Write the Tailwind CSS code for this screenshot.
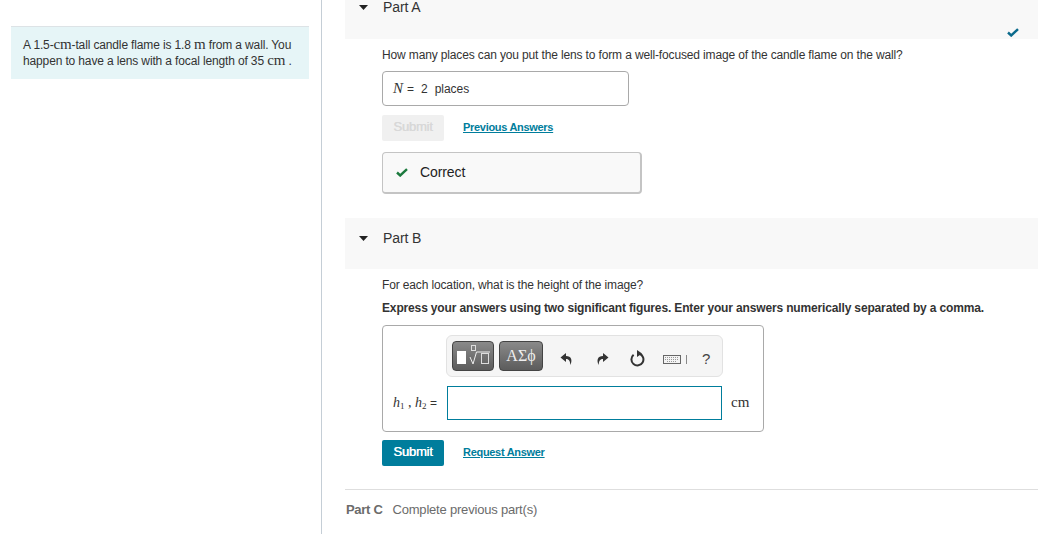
<!DOCTYPE html>
<html lang="en">
<head>
<meta charset="UTF-8">
<title>Part B</title>
<script src="https://cdn.jsdelivr.net/npm/@tailwindcss/browser@4"></script>
</head>
<body class="bg-white font-['Liberation_Sans',Arial,sans-serif] text-[12px] text-[#333] overflow-hidden">
<div class="flex h-[534px] w-[1047px] overflow-hidden">

  <!-- left: problem intro -->
  <div class="w-[322px] shrink-0 border-r border-[#c5ced6] pl-[11px] pr-[12px] pt-[26px]">
    <div class="h-[53px] w-[298px] border-t border-[#dde3e6] bg-[#e6f5f7] pl-[12px] pr-[10px] pt-[10px] leading-[15px] tracking-[-0.14px] text-[#333]">
      A 1.5-<span class="font-['Liberation_Serif',serif] text-[15px] leading-none">cm</span>-tall candle flame is 1.8 <span class="font-['Liberation_Serif',serif] text-[15px] leading-none">m</span> from a wall. You happen to have a lens with a focal length of 35 <span class="font-['Liberation_Serif',serif] text-[15px] leading-none">cm</span> .
    </div>
  </div>

  <!-- right: parts -->
  <div class="ml-[23px] w-[693px] shrink-0 -mt-[12px]">

    <!-- part A -->
    <div class="relative flex h-[51px] items-start bg-[#f8f8f8] pl-[14px] pt-[11px]">
      <svg class="mt-[6px] h-[5px] w-[9px]" viewBox="0 0 9 5"><path d="M0 0h9L4.5 5z" fill="#222"/></svg>
      <span class="ml-[15px] text-[14px] leading-[17px] tracking-[-0.1px] text-[#333]">Part A</span>
      <svg class="absolute right-[19px] top-[40px] h-[9px] w-[12px]" viewBox="0 0 12 9"><path d="M1 4.5l3.2 3L11 1.2" fill="none" stroke="#0b6a8c" stroke-width="2.4"/></svg>
    </div>
    <div class="pl-[37px]">
      <p class="mt-[9px] h-[15px] leading-[15px] tracking-[-0.14px]">How many places can you put the lens to form a well-focused image of the candle flame on the wall?</p>
      <div class="mt-[8px] flex h-[35px] w-[247px] items-center rounded-[4px] border border-[#a9a9a9] pl-[10px]">
        <span class="font-['Liberation_Serif',serif] text-[15px] italic">N</span>
        <span class="ml-[4px]">=</span>
        <span class="ml-[7px]">2</span>
        <span class="ml-[7px] tracking-[-0.05px]">places</span>
      </div>
      <div class="mt-[9px] flex items-center">
        <div class="flex h-[26px] w-[62px] items-center justify-center rounded-[2px] bg-[#f0f0f0] pb-[2px] text-[13px] tracking-[-0.2px] text-[#d8d8d8] [text-shadow:0.3px_0_0_#d8d8d8]">Submit</div>
        <a class="ml-[19px] mt-[-1px] text-[11px] font-bold tracking-[-0.3px] text-[#007d9c] underline">Previous Answers</a>
      </div>
      <div class="mt-[11px] flex h-[42px] w-[260px] items-center rounded-[4px] border border-[#c4c4c4] border-r-2 border-b-2 bg-[#f9f9f9] pl-[13px]">
        <svg class="h-[9px] w-[12px]" viewBox="0 0 12 9"><path d="M1 4.5l3.2 3L11 1.2" fill="none" stroke="#1c7a3e" stroke-width="2.4"/></svg>
        <span class="ml-[12px] text-[14px] tracking-[-0.1px] text-[#222]">Correct</span>
      </div>
    </div>

    <!-- part B -->
    <div class="mt-[24px] flex h-[51px] items-start bg-[#f8f8f8] pl-[14px] pt-[12px]">
      <svg class="mt-[6px] h-[5px] w-[9px]" viewBox="0 0 9 5"><path d="M0 0h9L4.5 5z" fill="#222"/></svg>
      <span class="ml-[15px] text-[14px] leading-[17px] tracking-[-0.1px] text-[#333]">Part B</span>
    </div>
    <div class="pl-[37px]">
      <p class="mt-[9px] h-[15px] leading-[15px] tracking-[-0.14px]">For each location, what is the height of the image?</p>
      <p class="mt-[8px] h-[15px] font-bold leading-[15px] tracking-[-0.15px]">Express your answers using two significant figures. Enter your answers numerically separated by a comma.</p>
      <div class="mt-[9px] h-[107px] w-[382px] rounded-[4px] border border-[#a9a9a9] pt-[9px]">
        <!-- toolbar -->
        <div class="ml-[63px] flex h-[42px] w-[277px] items-center rounded-[6px] border border-[#e2e2e2] bg-[#f5f5f5] pl-[5px]">
          <div class="flex h-[30px] w-[42px] items-center justify-center rounded-[4px] border border-[#444] bg-gradient-to-b from-[#8a8a8a] to-[#5c5c5c]">
            <svg class="h-[26px] w-[38px]" viewBox="0 0 38 26">
              <rect x="3" y="8" width="9" height="13" fill="#fff"/>
              <rect x="17.5" y="2.5" width="4" height="5" fill="none" stroke="#ddd" stroke-width="1"/>
              <path d="M16 14l3 7 3.5-12H36" fill="none" stroke="#eee" stroke-width="1"/>
              <rect x="27.5" y="10.5" width="7" height="10" fill="none" stroke="#ddd" stroke-width="1"/>
            </svg>
          </div>
          <div class="ml-[5px] flex h-[30px] w-[44px] items-center justify-center rounded-[4px] border border-[#444] bg-gradient-to-b from-[#8a8a8a] to-[#5c5c5c] font-['Liberation_Serif',serif] text-[16px] text-[#eee]">ΑΣϕ</div>
          <svg class="ml-[17px] mt-[5px] h-[14px] w-[13px]" viewBox="0 0 13 14"><path d="M6 1L0.5 5.5 6 10V7c2.6 0 4 1.4 4.4 6C12.6 8 11.5 3.9 6 3.9z" fill="#333"/></svg>
          <svg class="ml-[23px] mt-[5px] h-[14px] w-[13px]" viewBox="0 0 13 14"><path d="M7 1l5.5 4.5L7 10V7c-2.6 0-4 1.4-4.4 6C.4 8 1.5 3.9 7 3.9z" fill="#333"/></svg>
          <svg class="ml-[21px] mt-[5px] h-[17px] w-[15px]" viewBox="0 0 15 17"><path d="M9.5 3.8A6 6 0 1 1 3.6 4.8" fill="none" stroke="#333" stroke-width="2"/><path d="M7 0l5 3.4L7 7z" fill="#333"/></svg>
          <svg class="ml-[18px] mt-[7px] h-[9px] w-[18px]" viewBox="0 0 18 9"><rect x="0.5" y="0.5" width="17" height="8" fill="#f3f3f3" stroke="#666"/><path d="M2 2.5h14M2 4.5h14M4 6.5h10" stroke="#999" stroke-dasharray="1 1"/></svg>
          <span class="ml-[5px] mt-[7px] h-[9px] w-px bg-[#888]"></span>
          <span class="ml-[15px] mt-[6px] text-[15px] text-[#444]">?</span>
        </div>
        <!-- answer row -->
        <div class="mt-[9px] flex items-center pl-[10px]">
          <div class="w-[54px] whitespace-nowrap font-['Liberation_Serif',serif] text-[14px] leading-none text-[#333]"><i>h</i><sub class="text-[9px]">1</sub> , <i>h</i><sub class="text-[9px]">2</sub> <span class="font-['Liberation_Sans',sans-serif] text-[12px]">=</span></div>
          <div class="h-[34px] w-[275px] border border-[#007d9c] bg-white"></div>
          <span class="ml-[9px] mt-[-2px] font-['Liberation_Serif',serif] text-[15px]">cm</span>
        </div>
      </div>
      <div class="mt-[8px] flex items-center">
        <div class="flex h-[26px] w-[62px] items-center justify-center rounded-[2px] bg-[#007d9c] pb-[2px] text-[13px] tracking-[-0.2px] text-white [text-shadow:0.3px_0_0_#fff]">Submit</div>
        <a class="ml-[19px] mt-[-1px] text-[11px] font-bold tracking-[-0.3px] text-[#007d9c] underline">Request Answer</a>
      </div>
    </div>

    <!-- part C -->
    <div class="mt-[23px] flex h-[40px] items-center border-t border-[#dedede] text-[#6b6b6b]">
      <span class="ml-[1px] text-[13px] font-bold tracking-[-0.3px]">Part C</span>
      <span class="ml-[10px] text-[13px] tracking-[-0.2px]">Complete previous part(s)</span>
    </div>
  </div>
</div>
</body>
</html>
